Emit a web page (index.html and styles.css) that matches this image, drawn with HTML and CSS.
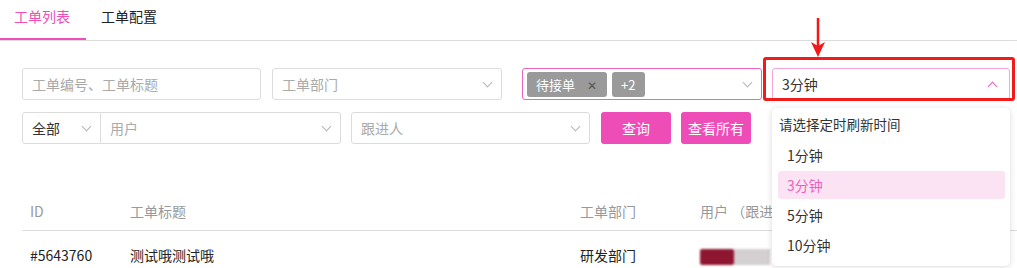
FILE: index.html
```html
<!DOCTYPE html>
<html lang="zh">
<head>
<meta charset="utf-8">
<link rel="stylesheet" href="styles.css">
</head>
<body>
<div class="tabs">
  <div class="tab active">工单列表</div>
  <div class="tab">工单配置</div>
</div>

<div class="filters">
  <div class="row">
    <div class="field w239 placeholder">工单编号、工单标题</div>
    <div class="field w230 ml11 placeholder">工单部门<span class="chev"></span></div>
    <div class="field w240 ml20 pink">
      <span class="tag">待接单<span class="x">✕</span></span>
      <span class="tag">+2</span>
      <span class="chev"></span>
    </div>
    <div class="timer ml10">
      <div class="field w238 lightpink value">3分钟<span class="chev up"></span></div>
      <div class="menu">
        <div class="menu-title">请选择定时刷新时间</div>
        <div class="opt">1分钟</div>
        <div class="opt sel">3分钟</div>
        <div class="opt">5分钟</div>
        <div class="opt">10分钟</div>
      </div>
      <div class="hl"></div>
      <div class="arrow">
        <svg width="16" height="40" viewBox="0 0 16 40"><path d="M8 0 V28" stroke="#f01818" stroke-width="2.5" fill="none"/><path d="M1 24 L8 39 L15 24 L8 28 Z" fill="#f01818"/></svg>
      </div>
    </div>
  </div>
  <div class="row mt12">
    <div class="field w79 value sq-r">全部<span class="chev"></span></div>
    <div class="field w240 placeholder sq-l">用户<span class="chev"></span></div>
    <div class="field w239 ml10 placeholder">跟进人<span class="chev"></span></div>
    <div class="btn ml11">查询</div>
    <div class="btn ml10">查看所有</div>
  </div>
</div>

<div class="table">
  <div class="tr th">
    <div class="c1">ID</div>
    <div class="c2">工单标题</div>
    <div class="c3">工单部门</div>
    <div class="c4">用户 （跟进人）</div>
  </div>
  <div class="tr td">
    <div class="c1">#5643760</div>
    <div class="c2">测试哦测试哦</div>
    <div class="c3">研发部门</div>
    <div class="c4"><span class="blur"><span class="b1"></span><span class="b2"></span></span></div>
  </div>
</div>
</body>
</html>
```
FILE: styles.css
```css
* { box-sizing: border-box; }
body {
  margin: 0;
  font-family: "Noto Sans CJK SC", "Noto Sans", sans-serif;
  font-size: 14px;
  color: #333;
  background: #fff;
  width: 1017px;
  height: 268px;
  overflow: hidden;
}
.tabs {
  display: flex;
  height: 41px;
  border-bottom: 1px solid #dcdcdc;
}
.tab {
  height: 40px;
  padding: 0 16px 0 15px;
  line-height: 32px;
  color: #222;
}
.tab.active {
  width: 86px;
  padding-left: 14px;
  color: #ee4fb8;
  border-bottom: 2px solid #ee4fb8;
}
.filters { padding: 27px 0 0 22px; }
.row { display: flex; align-items: flex-start; }
.mt12 { margin-top: 12px; }
.ml10 { margin-left: 10px; }
.ml11 { margin-left: 11px; }
.ml20 { margin-left: 20px; }
.w79 { width: 79px; }
.w230 { width: 230px; }
.w238 { width: 238px; }
.w239 { width: 239px; }
.w240 { width: 240px; }
.field {
  position: relative;
  height: 32px;
  border: 1px solid #dcdcdc;
  border-radius: 3px;
  padding-left: 9px;
  display: flex;
  align-items: center;
  background: #fff;
}
.sq-r { border-top-right-radius: 0; border-bottom-right-radius: 0; }
.sq-l { border-top-left-radius: 0; border-bottom-left-radius: 0; border-left: none; }
.placeholder { color: #aaa; }
.value { color: #333; }
.pink { border-color: #ee63bf; padding-left: 4px; }
.lightpink { border-color: #f5a4d8; }
.chev {
  position: absolute;
  right: 10px;
  top: 10px;
  width: 7px;
  height: 7px;
  border-right: 1px solid #b5b5b5;
  border-bottom: 1px solid #b5b5b5;
  transform: rotate(45deg);
}
.chev.up {
  top: 14px;
  right: 13px;
  border-color: #ee5fbc;
  transform: rotate(-135deg);
  border-width: 1.5px;
}
.tag {
  height: 25px;
  background: #9a9a9a;
  color: #fff;
  border-radius: 3px;
  display: inline-flex;
  align-items: center;
  padding: 0 10px 0 9px;
  margin-right: 5px;
  font-size: 13px;
}
.tag .x { margin-left: 12px; color: #555; font-size: 12px; }
.timer { position: relative; }
.menu {
  position: absolute;
  left: 0;
  top: 40px;
  width: 238px;
  height: 158px;
  background: #fff;
  border-radius: 5px;
  box-shadow: 0 1px 6px rgba(0,0,0,0.15);
  padding: 5px 5px 0 6px;
  z-index: 2;
}
.menu-title { height: 26px; line-height: 22px; padding-left: 1px; color: #333; font-size: 13.5px; }
.opt {
  height: 28px;
  margin-top: 2px;
  line-height: 28px;
  padding-left: 9px;
  color: #333;
  border-radius: 3px;
}
.opt.sel { background: #fce3f3; color: #ee5fbc; }
.hl {
  position: absolute;
  left: -9px;
  top: -11px;
  width: 252px;
  height: 44px;
  border: 3px solid #f21b1b;
  border-radius: 3px;
  z-index: 3;
}
.arrow {
  position: absolute;
  left: 38px;
  top: -50px;
  width: 16px;
  height: 40px;
  z-index: 3;
}
.arrow svg { display: block; }
.btn {
  width: 70px;
  height: 32px;
  background: #ee4db8;
  color: #fff;
  border-radius: 3px;
  display: flex;
  align-items: center;
  justify-content: center;
}
.table { margin: 48px 0 0 22px; }
.tr { display: flex; }
.th { height: 39px; align-items: center; color: #999; border-bottom: 1px solid #dcdcdc; }
.td { height: 48px; align-items: center; color: #222; }
.c1 { width: 100px; padding-left: 8px; }
.c2 { width: 450px; padding-left: 8px; }
.c3 { width: 120px; padding-left: 8px; }
.c4 { padding-left: 8px; white-space: nowrap; }
.th .c4 { width: 80px; overflow: hidden; }
.blur { display: inline-flex; height: 16px; vertical-align: middle; filter: blur(1.2px); }
.b1 { width: 34px; background: #8e1630; border-radius: 2px; }
.b2 { width: 36px; background: #d4cfd0; }
```
